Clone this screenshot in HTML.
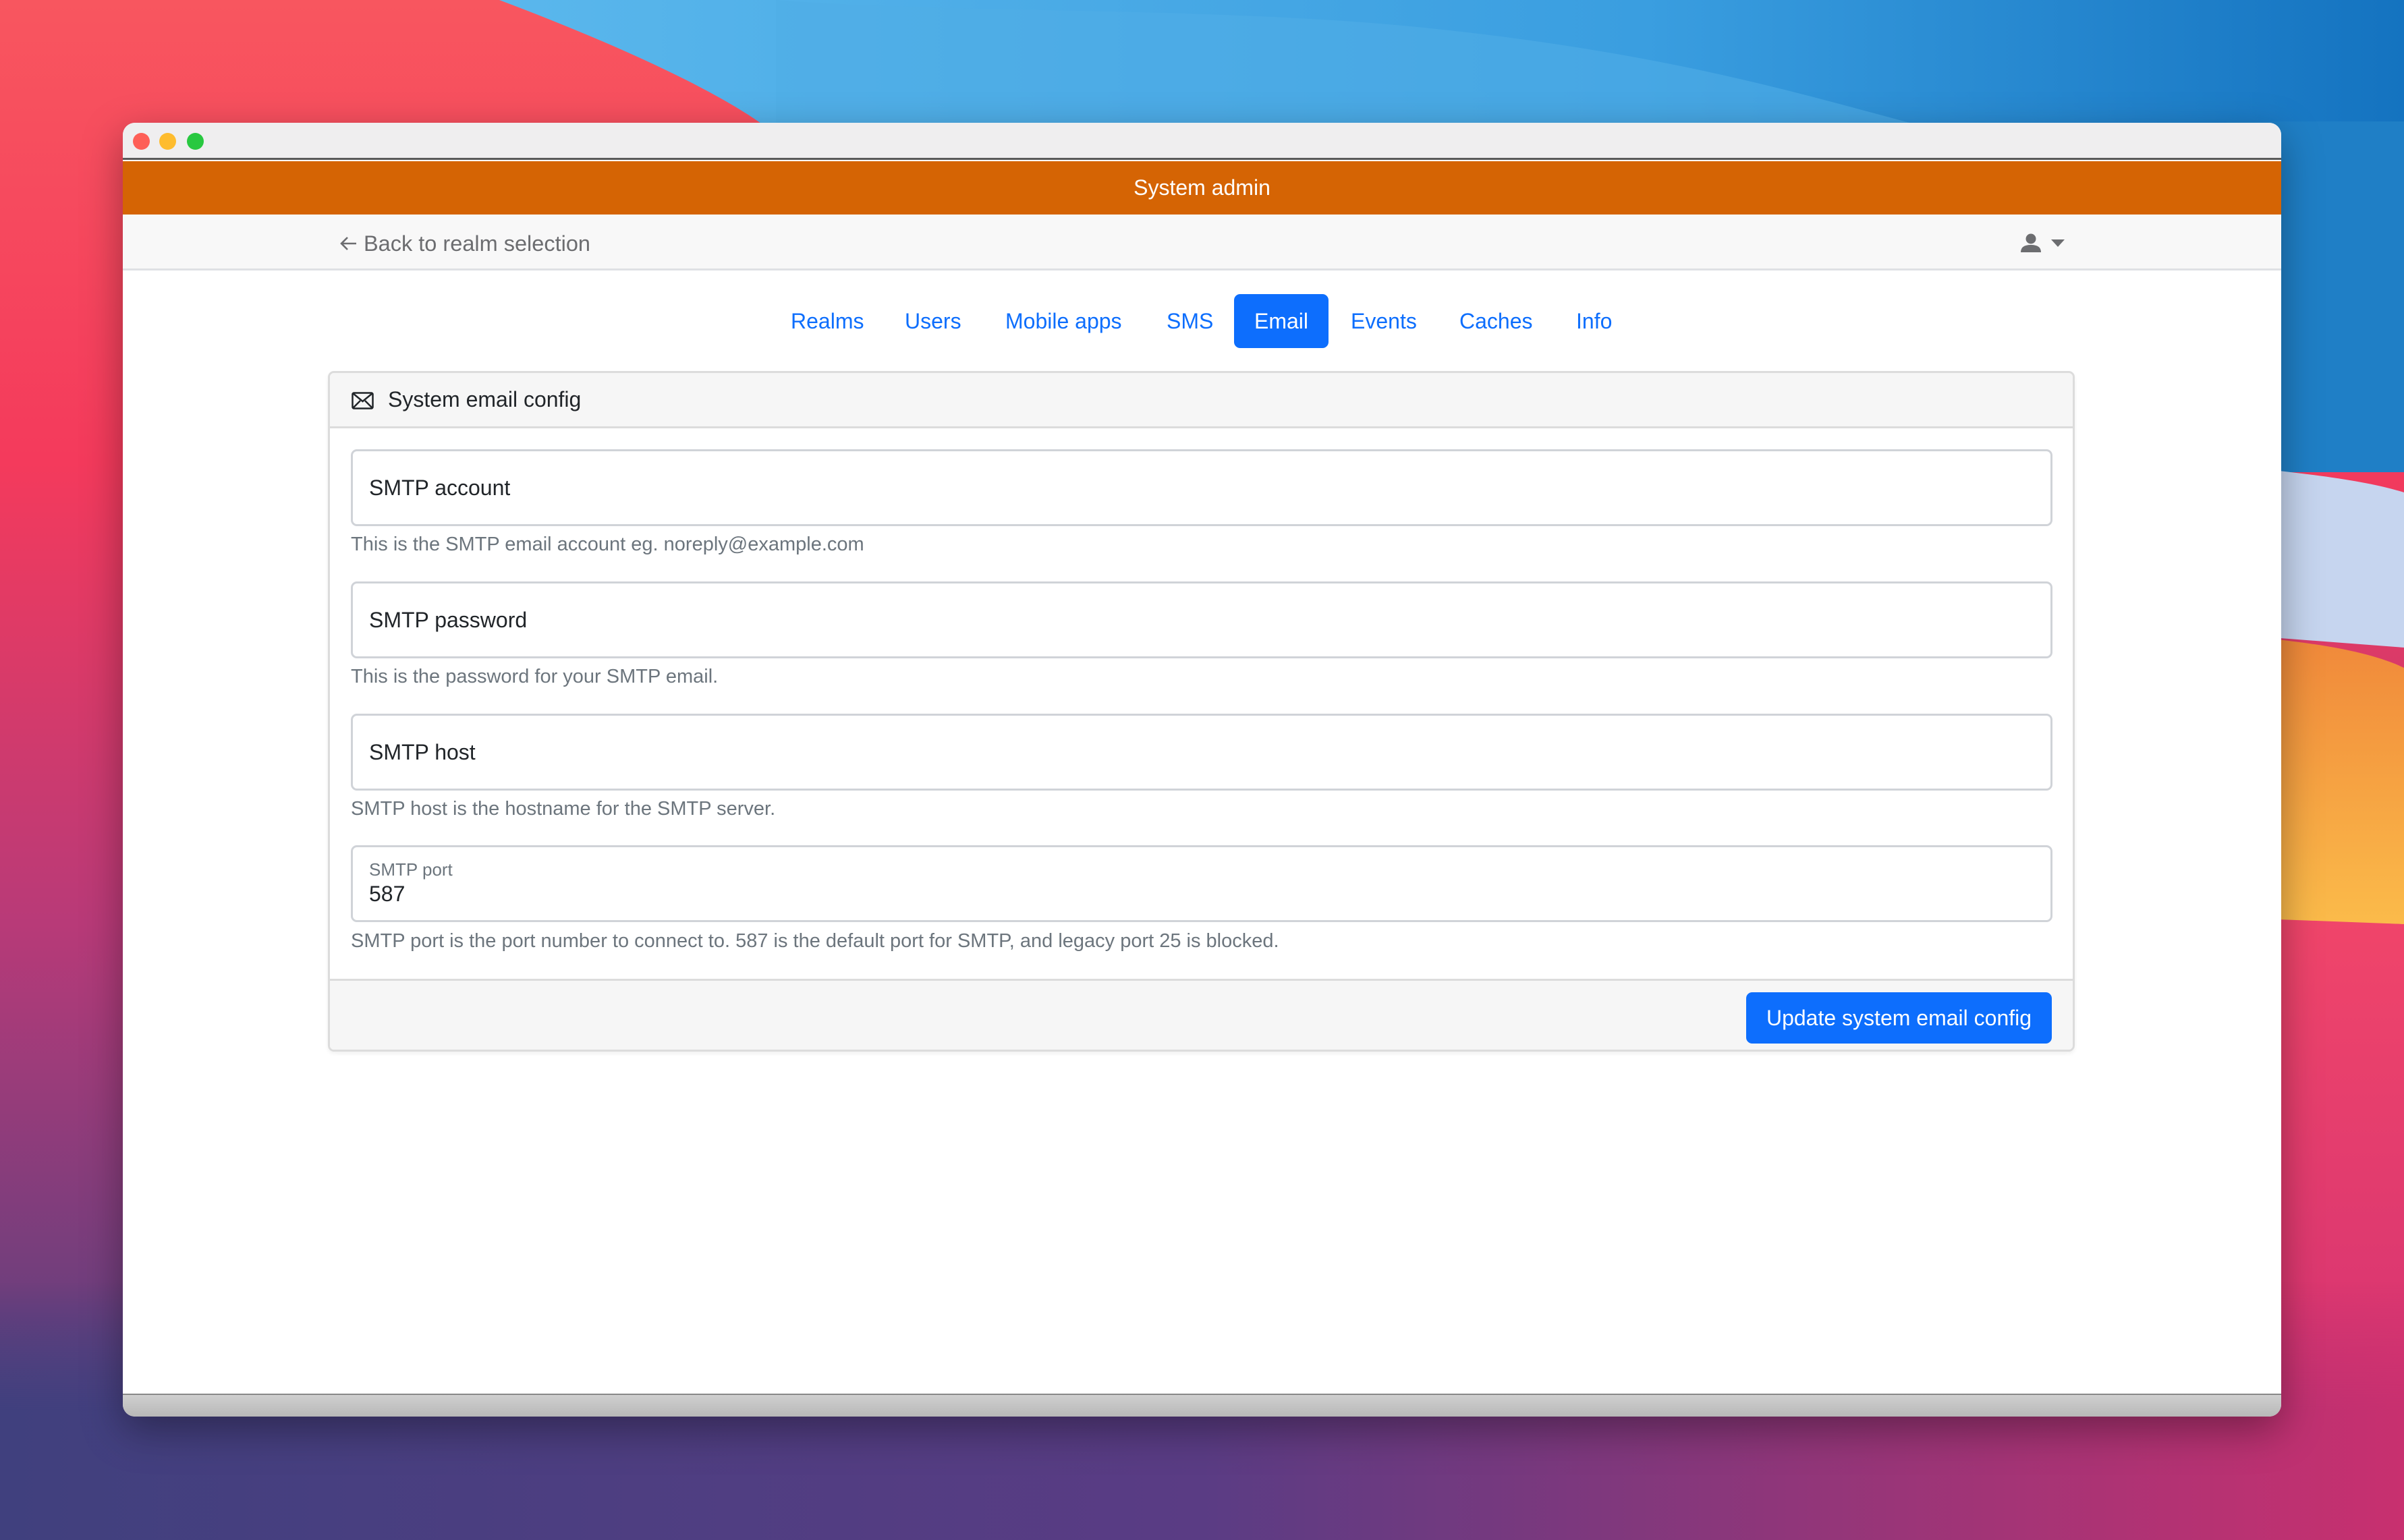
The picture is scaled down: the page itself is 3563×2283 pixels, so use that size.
<!DOCTYPE html>
<html><head><meta charset="utf-8"><style>
*{margin:0;padding:0;box-sizing:border-box}
body{width:3563px;height:2283px;overflow:hidden;position:relative;font-family:"Liberation Sans",Arial,sans-serif;background:#6a3c82}
.bg{position:absolute;left:0;top:0}
.win{position:absolute;left:182px;top:182px;width:3199px;height:1918px;background:#fff;border-radius:18px;overflow:hidden;box-shadow:0 20px 60px rgba(0,0,0,.35)}
.tb{position:absolute;left:0;top:0;width:100%;height:55px;background:#efeeef;border-bottom:3px solid #5a5a5a}
.dot{position:absolute;top:15px;width:25px;height:25px;border-radius:50%}
.orange{position:absolute;left:0;top:57px;width:100%;height:79px;background:#d56404;color:#fff;font-size:32px;text-align:center;line-height:79px}
.nav{position:absolute;left:0;top:136px;width:100%;height:83px;background:#f8f8f8;border-bottom:3px solid #dfe1e4}
.back{position:absolute;left:357px;top:0;line-height:86px;font-size:32.5px;color:#6c6d70}
.tabs a{position:absolute;top:254px;height:80px;line-height:80px;font-size:32px;color:#0d6efd;text-decoration:none;padding:0 32px}
.card{position:absolute;left:304px;top:368px;width:2589px;height:1009px;border:3px solid #dcdcdc;border-radius:9px;overflow:hidden;box-shadow:0 3px 6px rgba(0,0,0,.06)}
.ch{height:82px;background:#f6f6f6;border-bottom:3px solid #dcdcdc;font-size:32px;line-height:79px;padding-left:86px;color:#212529;position:relative}
.inp{position:absolute;left:31px;width:2522px;height:114px;border:3px solid #d0d3d8;border-radius:9px;font-size:32px;color:#212529;padding-left:24px;line-height:108px}
.help{position:absolute;left:31px;font-size:29px;color:#6c757d}
.cf{position:absolute;left:0;top:898px;width:100%;height:111px;background:#f6f6f6;border-top:3px solid #dcdcdc}
.btn{position:absolute;right:31px;top:17px;width:453px;height:76px;background:#0d6efd;color:#fff;border-radius:9px;font-size:32px;line-height:76px;text-align:center}
.foot{position:absolute;left:0;bottom:0;width:100%;height:34px;background:linear-gradient(#cfcfcf,#b8b8b8);border-top:2px solid #888}
</style></head><body>
<svg class="bg" width="3563" height="2283" viewBox="0 0 3563 2283">
<defs>
<linearGradient id="lg" x1="0" y1="0" x2="0" y2="1"><stop offset="0" stop-color="#f8565f"/><stop offset=".3" stop-color="#f43a5c"/><stop offset=".6" stop-color="#b83a78"/><stop offset="1" stop-color="#3f4180"/></linearGradient>
<linearGradient id="bl" x1="0" y1="0" x2="1" y2="0"><stop offset="0" stop-color="#5ab7ec"/><stop offset=".6" stop-color="#3a9ee0"/><stop offset="1" stop-color="#1473c0"/></linearGradient>
<linearGradient id="or" x1="0" y1="0" x2="0" y2="1"><stop offset="0" stop-color="#f0883a"/><stop offset="1" stop-color="#fbbb4a"/></linearGradient>
<linearGradient id="pk" x1="0" y1="0" x2="0" y2="1"><stop offset="0" stop-color="#f0456a"/><stop offset="1" stop-color="#cf2f74"/></linearGradient>
<linearGradient id="bt" x1="0" y1="0" x2="1" y2="0"><stop offset="0" stop-color="#40407e"/><stop offset=".5" stop-color="#5a3c84"/><stop offset="1" stop-color="#c8306f"/></linearGradient>
<linearGradient id="fade" x1="0" y1="0" x2="0" y2="1"><stop offset="0" stop-color="#fff" stop-opacity="0"/><stop offset=".5" stop-color="#fff" stop-opacity="1"/></linearGradient>
<mask id="m"><rect x="0" y="1900" width="3563" height="383" fill="url(#fade)"/></mask>
</defs>
<rect width="3563" height="2283" fill="url(#lg)"/>
<path d="M740 0 C 900 60 1080 140 1150 200 L 3563 200 L3563 0 Z" fill="url(#bl)"/>
<path d="M1150 0 C1400 20 1800 10 2100 40 C 2500 80 2700 150 2900 200 L1150 200 Z" fill="#50aee6" opacity=".6"/>
<rect x="3300" y="180" width="263" height="520" fill="#1f7fc6"/>
<path d="M3300 690 C3400 700 3500 710 3563 730 L3563 960 L3300 940 Z" fill="#c6d5ef"/>
<path d="M3300 940 C3400 950 3500 960 3563 990 L3563 1370 C3480 1368 3400 1365 3300 1360 Z" fill="url(#or)"/>
<path d="M3300 1360 L3563 1370 L3563 2283 L3300 2283 Z" fill="url(#pk)"/>
<rect x="0" y="1900" width="3563" height="383" fill="url(#bt)" mask="url(#m)"/>
</svg>
<div class="win">
<div class="tb">
<div class="dot" style="left:15px;background:#fe5f57"></div>
<div class="dot" style="left:54px;background:#febc2e"></div>
<div class="dot" style="left:95px;background:#28c840"></div>
</div>
<div class="orange">System admin</div>
<div class="nav">
<svg style="position:absolute;left:322px;top:32px" width="26" height="22" viewBox="0 0 26 22"><path d="M24 11 H3 M11 2 L2 11 L11 20" fill="none" stroke="#6c6d70" stroke-width="2.6"/></svg>
<div class="back">Back to realm selection</div>
<svg style="position:absolute;left:2813px;top:28px" width="30" height="28" viewBox="0 0 30 28"><circle cx="15" cy="8" r="7.5" fill="#6c6d70"/><path d="M0 28 Q0 17 15 17 Q30 17 30 28 Z" fill="#6c6d70"/></svg>
<svg style="position:absolute;left:2858px;top:37px" width="20" height="11"><path d="M0 0 L20 0 L10 11 Z" fill="#6c6d70"/></svg>
</div>
<div class="tabs">
<a style="left:958px">Realms</a>
<a style="left:1127px">Users</a>
<a style="left:1276px">Mobile apps</a>
<a style="left:1515px">SMS</a>
<a style="left:1647px;width:140px;background:#0d6efd;color:#fff;border-radius:9px;padding:0;text-align:center">Email</a>
<a style="left:1788px">Events</a>
<a style="left:1949px">Caches</a>
<a style="left:2122px">Info</a>
</div>
<div class="card">
<div class="ch"><svg style="position:absolute;left:32px;top:28px" width="33" height="26" viewBox="0 0 33 26"><rect x="1.5" y="1.5" width="30" height="23" rx="2" fill="none" stroke="#212529" stroke-width="2.5"/><path d="M2 2 L16.5 14 L31 2 M2 24 L13 13 M31 24 L20 13" fill="none" stroke="#212529" stroke-width="2.5"/></svg>System email config</div>
<div class="inp" style="top:113px">SMTP account</div>
<div class="help" style="top:238px">This is the SMTP email account eg. noreply@example.com</div>
<div class="inp" style="top:309px">SMTP password</div>
<div class="help" style="top:434px">This is the password for your SMTP email.</div>
<div class="inp" style="top:505px">SMTP host</div>
<div class="help" style="top:630px">SMTP host is the hostname for the SMTP server.</div>
<div class="inp" style="top:700px;line-height:normal"><div style="font-size:26px;color:#6c757d;margin-top:18px">SMTP port</div><div style="margin-top:2px">587</div></div>
<div class="help" style="top:826px">SMTP port is the port number to connect to. 587 is the default port for SMTP, and legacy port 25 is blocked.</div>
<div class="cf"><div class="btn">Update system email config</div></div>
</div>
<div class="foot"></div>
</div>
</body></html>
